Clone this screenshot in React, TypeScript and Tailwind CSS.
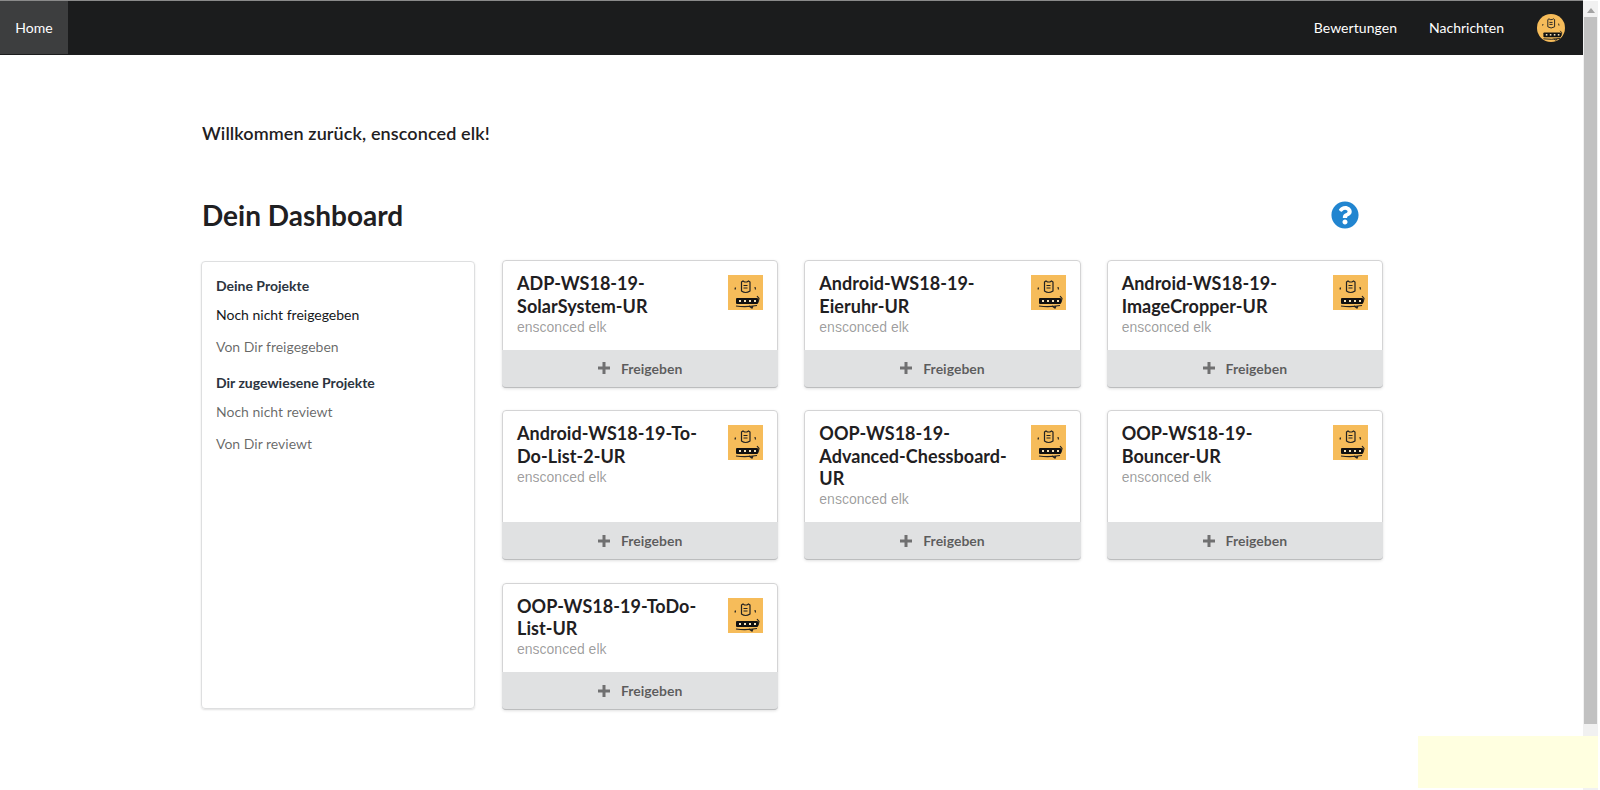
import { FaQuestionCircle } from "react-icons/fa";

const projects = [
  "ADP-WS18-19-SolarSystem-UR",
  "Android-WS18-19-Eieruhr-UR",
  "Android-WS18-19-ImageCropper-UR",
  "Android-WS18-19-To-Do-List-2-UR",
  "OOP-WS18-19-Advanced-Chessboard-UR",
  "OOP-WS18-19-Bouncer-UR",
  "OOP-WS18-19-ToDo-List-UR",
];

function Avatar({ className }: { className: string }) {
  return (
    <svg viewBox="0 0 35 35" className={className}>
      <rect width="35" height="35" fill="#f6bc5a" />
      <g fill="none" stroke="#222" strokeWidth="1.2">
        <path d="M13.500 7 L15 6 L16.500 7 L19 7 L20.500 6 L22 7 L22 16 Q17.500 19 13.500 16 Z" />
        <path d="M15.500 10.500h4M15.500 13h4" />
        <path d="M7.500 12.500l-.5 2M27 12l.5 2.500" />
        <path d="M8 31q10 1.500 21-.5M29 21l2 2.500-1 4M21 31l3 2 1-2" />
      </g>
      <rect x="8" y="23" width="22" height="6" rx="1" fill="#111" />
      <g fill="#f6e2b8">
        <rect x="11" y="25" width="2" height="2" />
        <rect x="16" y="25" width="2" height="2" />
        <rect x="21" y="25" width="2" height="2" />
        <rect x="26" y="25" width="2" height="2" />
      </g>
    </svg>
  );
}

function ProjectCard({ title }: { title: string }) {
  return (
    <div className="flex flex-col rounded-[4px] border border-[#d4d4d5] shadow-[0_1px_3px_rgba(0,0,0,0.12)]">
      <div className="flex flex-1 justify-between gap-3 px-[14px] pt-[14px] pb-[14px]">
        <div className="min-w-0 flex-1">
          <div className="-mt-[3px] text-[18px] font-bold leading-[22.500px] tracking-[0.04px] text-[#1f2022] [overflow-wrap:anywhere]">{title}</div>
          <div className="mt-[0.6px] font-['Liberation_Sans',sans-serif] text-[14px] leading-[18px] text-black/40">ensconced elk</div>
        </div>
        <Avatar className="h-[35px] w-[35px] shrink-0" />
      </div>
      <button className="-mx-px -mb-px flex h-[38px] items-center justify-center gap-[11px] rounded-b-[4px] border-b border-[#bcbdbe] bg-[#e0e1e2] text-[14px] font-bold text-black/60">
        <svg viewBox="0 0 12 12" className="h-[12px] w-[12px] text-black/50">
          <path d="M4.500 0h3v4.500H12v3H7.500V12h-3V7.500H0v-3h4.500z" fill="currentColor" />
        </svg>
        Freigeben
      </button>
    </div>
  );
}

export default function App() {
  return (
    <div className="relative h-[790px] w-[1600px] overflow-hidden bg-white font-['Lato',sans-serif]">
      <div className="h-full w-[1583px]">
        <nav className="flex h-[55px] items-center justify-between border-t border-[#8a8a8a] bg-[#1b1c1d] pb-px text-[14px] text-white">
          <div className="flex h-full w-[68px] items-center justify-center bg-[#3d3e3f]">Home</div>
          <div className="flex items-center pr-[18px]">
            <span className="tracking-[0.05px]">Bewertungen</span>
            <span className="ml-[32px]">Nachrichten</span>
            <Avatar className="ml-[33px] h-[28px] w-[28px] rounded-full" />
          </div>
        </nav>

        <main className="pl-[201px] pr-[200px]">
          <h2 className="pl-px pt-[66px] text-[18px] font-semibold leading-[24px] tracking-[0.11px] text-[#1f2022]">Willkommen zurück, ensconced elk!</h2>
          <div className="mt-[52px] flex items-center justify-between pl-px pr-[24px]">
            <h1 className="text-[28px] font-bold leading-[36px] text-[#1f2022]">Dein Dashboard</h1>
            <FaQuestionCircle className="h-[28px] w-[28px] text-[#2185d0]" />
          </div>

          <div className="mt-[27px] flex gap-[27px]">
            <aside className="my-px w-[274px] shrink-0 rounded-[4px] border border-[#dedfe0] px-[14px] py-[15px] text-[14px] shadow-[0_1px_2px_rgba(0,0,0,0.12)]">
              <div className="font-bold leading-[18px] text-[#2c3440]">Deine Projekte</div>
              <div className="mt-[11px] leading-[18px] text-[#15171a]">Noch nicht freigegeben</div>
              <div className="mt-[14px] leading-[18px] text-black/60">Von Dir freigegeben</div>
              <div className="mt-[18px] font-bold leading-[18px] text-[#2c3440]">Dir zugewiesene Projekte</div>
              <div className="mt-[11px] leading-[18px] text-black/60">Noch nicht reviewt</div>
              <div className="mt-[14px] leading-[18px] text-black/60">Von Dir reviewt</div>
            </aside>

            <div className="grid w-[882px] grid-cols-3 gap-x-[26px] gap-y-[22.600px]">
              {projects.map((p) => (
                <ProjectCard key={p} title={p} />
              ))}
            </div>
          </div>
        </main>
      </div>

      {/* fake browser scrollbar */}
      <div className="absolute bottom-0 left-[1583px] top-px w-[15px] bg-[#f1f1f1]">
        <div className="mx-auto mt-[7px] h-0 w-0 border-x-[4px] border-b-[5px] border-x-transparent border-b-[#a3a3a3]" />
        <div className="mx-auto mt-[4px] h-[707px] w-[13px] bg-[#c1c1c1]" />
      </div>
      <div className="absolute left-[1418px] top-[736px] h-[52px] w-[180px] bg-[#ffffe0]" />
    </div>
  );
}
